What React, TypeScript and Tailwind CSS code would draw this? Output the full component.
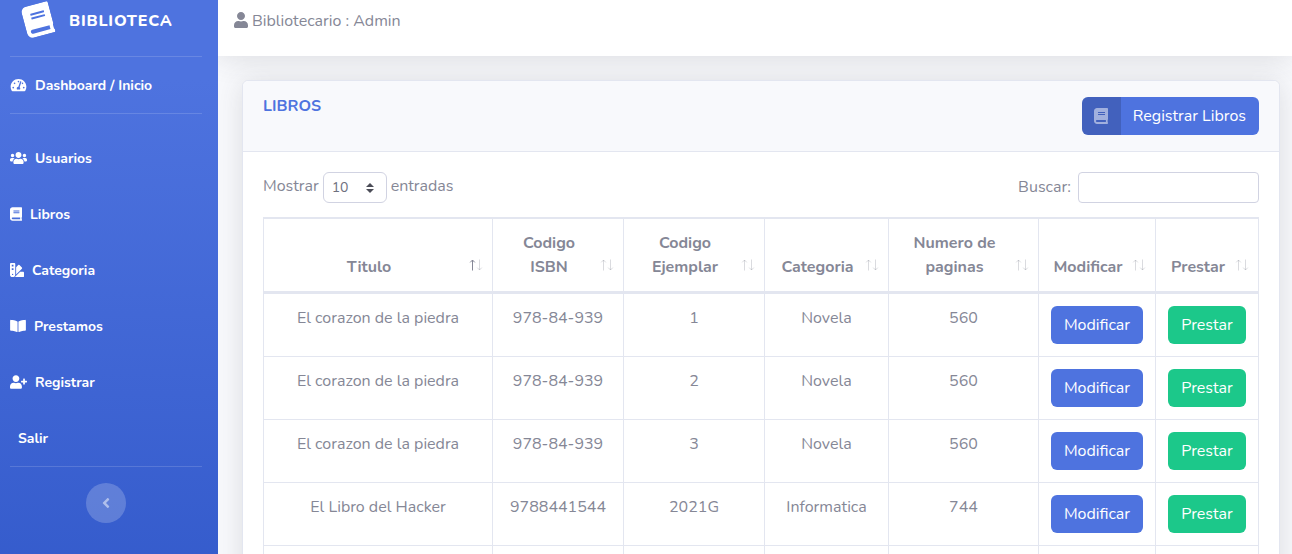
import React from "react";
import type { IconType } from "react-icons";
import {
  FaAngleLeft,
  FaBook,
  FaBookOpen,
  FaSwatchbook,
  FaTachometerAlt,
  FaUser,
  FaUserPlus,
  FaUsers,
} from "react-icons/fa";

type NavItem = { label: string; icon?: IconType; iconClass?: string };

const navItems: NavItem[] = [
  { label: "Usuarios", icon: FaUsers, iconClass: "w-[17px]" },
  { label: "Libros", icon: FaBook, iconClass: "w-[12px]" },
  { label: "Categoria", icon: FaSwatchbook, iconClass: "w-[14px]" },
  { label: "Prestamos", icon: FaBookOpen, iconClass: "w-[16px]" },
  { label: "Registrar", icon: FaUserPlus, iconClass: "w-[17px]" },
  { label: "Salir" },
];

type Column = { title: string; width: string; sorted?: boolean };

const columns: Column[] = [
  { title: "Titulo", width: "w-auto", sorted: true },
  { title: "Codigo ISBN", width: "w-[131px]" },
  { title: "Codigo Ejemplar", width: "w-[141px]" },
  { title: "Categoria", width: "w-[124px]" },
  { title: "Numero de paginas", width: "w-[150px]" },
  { title: "Modificar", width: "w-[117px]" },
  { title: "Prestar", width: "w-[103px]" },
];

const books = [
  ["El corazon de la piedra", "978-84-939", "1", "Novela", "560"],
  ["El corazon de la piedra", "978-84-939", "2", "Novela", "560"],
  ["El corazon de la piedra", "978-84-939", "3", "Novela", "560"],
  ["El Libro del Hacker", "9788441544", "2021G", "Informatica", "744"],
];

function Divider() {
  return <hr className="mr-4 ml-2.5 border-white/15" />;
}

function NavLink({ label, icon: Icon, iconClass }: NavItem) {
  return (
    <a
      href="#"
      className={`flex h-14 items-center pt-0.5 text-sm font-bold text-white ${Icon ? "gap-2 pl-2.5" : "pl-[18px]"}`}
    >
      {Icon && <Icon className={`mb-0.5 h-[14px] ${iconClass}`} />}
      {label}
    </a>
  );
}

function Sidebar() {
  return (
    <nav className="w-[218px] shrink-0 bg-[linear-gradient(180deg,#4e73df_80px,#224abe_940px)]">
      <a href="#" className="flex h-14 items-start gap-[17px] pl-6 text-white">
        <FaBook className="mt-1 h-8 w-7 -rotate-15" />
        <span className="mt-[9px] text-base leading-6 font-extrabold tracking-wider uppercase">Biblioteca</span>
      </a>
      <Divider />
      <NavLink label="Dashboard / Inicio" icon={FaTachometerAlt} iconClass="w-[17px]" />
      <Divider />
      <div className="pt-4">
        {navItems.map((item) => (
          <NavLink key={item.label} {...item} />
        ))}
      </div>
      <Divider />
      <div className="flex justify-center pt-4 pr-1.5">
        <button
          type="button"
          aria-label="Contraer menu"
          className="flex size-10 items-center justify-center rounded-full bg-white/20 text-white/50"
        >
          <FaAngleLeft className="size-4" />
        </button>
      </div>
    </nav>
  );
}

function SortIcon({ ascending }: { ascending?: boolean }) {
  return (
    <svg viewBox="0 0 14 12" className="h-3 w-3.5" fill="none" stroke="currentColor" strokeWidth="1">
      <path d="M3.5 11.5V1M1.2 3.4L3.5 1L5.8 3.4" opacity={ascending ? 1 : 0.3} />
      <path d="M10.5 .5V11M8.2 8.6L10.5 11L12.8 8.6" opacity="0.3" />
    </svg>
  );
}

function BooksTable() {
  return (
    <table className="mt-3.5 w-full table-fixed border-separate border-spacing-0 border-t border-l border-[#e3e6f0] text-center">
      <colgroup>
        {columns.map((c) => (
          <col key={c.title} className={c.width} />
        ))}
      </colgroup>
      <thead>
        <tr>
          {columns.map((c) => (
            <th
              key={c.title}
              aria-sort={c.sorted ? "ascending" : undefined}
              className="relative border-t border-r border-b-3 border-[#e3e6f0] py-3 pr-[30px] pl-3 align-bottom"
            >
              <button type="button" className="font-bold">
                {c.title}
              </button>
              <span className="absolute right-[9px] bottom-5">
                <SortIcon ascending={c.sorted} />
              </span>
            </th>
          ))}
        </tr>
      </thead>
      <tbody>
        {books.map((book) => (
          <tr key={book.join()}>
            {book.map((value, i) => (
              <td key={i} className="border-r border-b border-[#e3e6f0] p-3 align-top">
                {value}
              </td>
            ))}
            <td className="border-r border-b border-[#e3e6f0] p-3">
              <button type="button" className="block h-[38px] w-full rounded-md bg-[#4e73df] text-white">
                Modificar
              </button>
            </td>
            <td className="border-r border-b border-[#e3e6f0] p-3">
              <button type="button" className="block h-[38px] w-full rounded-md bg-[#1cc88a] text-white">
                Prestar
              </button>
            </td>
          </tr>
        ))}
        <tr>
          {columns.map((c) => (
            <td key={c.title} className="h-16 border-r border-b border-[#e3e6f0]" />
          ))}
        </tr>
      </tbody>
    </table>
  );
}

export default function App() {
  return (
    <div className="flex h-screen overflow-hidden bg-[#f8f9fc] font-[Nunito,Lato,sans-serif] text-base text-[#858796]">
      <Sidebar />
      <div className="min-w-0 flex-1 overflow-hidden">
        <header className="flex h-14 items-start gap-1 bg-white pt-[9px] pl-4 shadow-[0_2px_28px_rgba(58,59,69,0.15)]">
          <FaUser className="mt-[3px] h-4 w-3.5" />
          <span>Bibliotecario : Admin</span>
        </header>
        <main className="pt-6 pr-3 pb-6 pl-6">
          <section className="rounded-md border border-[#e3e6f0] bg-white shadow-[0_2px_28px_rgba(58,59,69,0.15)]">
            <div className="flex items-start justify-between rounded-t-md border-b border-[#e3e6f0] bg-[#f8f9fc] px-5 py-4">
              <h1 className="leading-[18px] font-bold text-[#4e73df]">LIBROS</h1>
              <button
                type="button"
                className="flex h-[38px] items-center overflow-hidden rounded-md bg-[#4e73df] text-white"
              >
                <span className="flex h-full w-[39px] items-center justify-center bg-black/15 text-white/50">
                  <FaBook className="size-4" />
                </span>
                <span className="pr-[13px] pl-3">Registrar Libros</span>
              </button>
            </div>
            <div className="p-5">
              <div className="flex items-start justify-between">
                <label className="flex items-start gap-1">
                  <span className="pt-0.5">Mostrar</span>
                  <span className="relative">
                    <select
                      defaultValue="10"
                      className="block h-[31px] w-16 appearance-none rounded-md border border-[#d1d3e2] bg-white pl-2 text-sm text-[#6e707e]"
                    >
                      <option>10</option>
                      <option>25</option>
                      <option>50</option>
                      <option>100</option>
                    </select>
                    <svg
                      viewBox="0 0 8 10"
                      className="pointer-events-none absolute top-[11px] right-[13px] h-2.5 w-2"
                      fill="#4b4c57"
                    >
                      <path d="M4 0L8 4H0zM4 10L0 6H8z" />
                    </svg>
                  </span>
                  <span className="pt-0.5">entradas</span>
                </label>
                <label className="flex items-start gap-[7px]">
                  <span className="pt-[3px]">Buscar:</span>
                  <input
                    type="search"
                    className="h-[31px] w-[181px] rounded border border-[#d1d3e2] bg-white px-2 text-sm text-[#6e707e]"
                  />
                </label>
              </div>
              <BooksTable />
            </div>
          </section>
        </main>
      </div>
    </div>
  );
}
